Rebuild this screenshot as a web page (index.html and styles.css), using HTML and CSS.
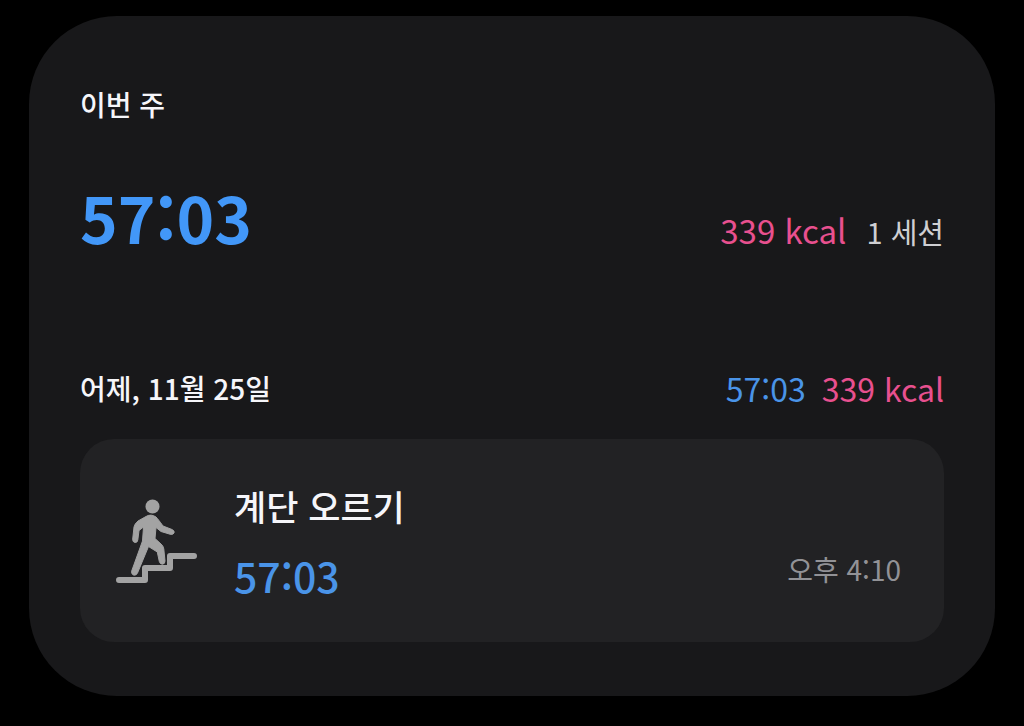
FILE: index.html
```html
<!DOCTYPE html>
<html lang="ko">
  <head>
    <meta charset="utf-8">
    <title>이번 주</title>
    <link rel="stylesheet" href="styles.css">
  </head>
  <body>
    <main class="panel">
      <h1 class="heading">이번 주</h1>
      <div class="summary">
        <div class="total">57:03</div>
        <div class="stats">
          <span class="kcal">339 kcal</span>
          <span class="sessions">1 세션</span>
        </div>
      </div>

      <div class="day">
        <h2 class="heading">어제, 11월 25일</h2>
        <div class="day-stats">
          <span class="time">57:03</span>
          <span class="kcal">339 kcal</span>
        </div>
      </div>

      <div class="workout">
        <svg class="icon" viewBox="0 -2 82 88" aria-hidden="true">
          <circle cx="36.5" cy="7.5" r="7"/>
          <path class="walker" d="M22 22 L30 17.5 Q35 14.5 40 18 Q42 20 47 27 L56 30.5 Q59 32 58 34 Q57 36 54 35.2 L45 32.5 L40 28.5 L39 39.5 L45 45 Q47.5 47 47.8 50 L49 62 Q49 65 46.5 65.2 Q44 65.2 43.3 62.5 L41.3 53 L32.5 47.5 L21.5 74 Q20 77 17.5 76 Q15 75 15.7 72 L26.5 42 L27.5 28 L23 31.5 L21.8 41 Q21.5 43.8 18.8 43.5 Q16.5 43 16.7 40 L18 28 Q18.5 25 22 22 Z"/>
          <path class="stairs" d="M3 81 H29 V69 H54 V57 H78"/>
        </svg>
        <div class="details">
          <div class="name">계단 오르기</div>
          <div class="duration">57:03</div>
        </div>
        <div class="clock">오후 4:10</div>
      </div>
    </main>
  </body>
</html>
```
FILE: styles.css
```css
* {
  box-sizing: border-box;
}
body {
  margin: 0;
  padding: 16px 29px 30px;
  background: #000;
  color: #f6f6fa;
  font-family: "Noto Sans CJK KR", sans-serif;
}
.panel {
  padding: 68px 51px 54px;
  background: #18181a;
  border-radius: 88px;
}
.heading {
  margin: 0;
  font-size: 28px;
  font-weight: 500;
  line-height: 40px;
}
.summary {
  display: flex;
  justify-content: space-between;
  align-items: flex-end;
  margin-top: 52px;
}
.total {
  color: #4297f8;
  font-size: 64px;
  font-weight: 700;
  line-height: 80px;
}
.stats {
  display: flex;
  align-items: baseline;
  gap: 20px;
  padding-bottom: 5px;
  font-size: 33px;
  line-height: 40px;
}
.kcal { color: #e8508f; }
.sessions {
  color: #cfcfd2;
  font-size: 29px;
}
.day {
  display: flex;
  justify-content: space-between;
  align-items: center;
  margin-top: 112px;
}
.day-stats {
  display: flex;
  gap: 16px;
  font-size: 32px;
  line-height: 40px;
}
.time { color: #4a94e8; }
.workout {
  display: flex;
  align-items: center;
  margin-top: 31px;
  padding: 43px 43px 43px 36px;
  background: #222224;
  border-radius: 34px;
}
.icon {
  width: 82px;
  height: 88px;
  fill: #a3a3a3;
}
.walker {
  stroke: #a3a3a3;
  stroke-width: 1;
}
.stairs {
  fill: none;
  stroke: #a3a3a3;
  stroke-width: 6;
  stroke-linecap: round;
  stroke-linejoin: round;
}
.details {
  flex: 1;
  margin-left: 36px;
}
.name {
  font-size: 35px;
  font-weight: 500;
  line-height: 48px;
}
.duration {
  margin-top: 21px;
  color: #4a94e8;
  font-size: 41px;
  font-weight: 500;
  line-height: 48px;
}
.clock {
  align-self: flex-end;
  padding-bottom: 10px;
  color: #929296;
  font-size: 28px;
  line-height: 40px;
}
```
